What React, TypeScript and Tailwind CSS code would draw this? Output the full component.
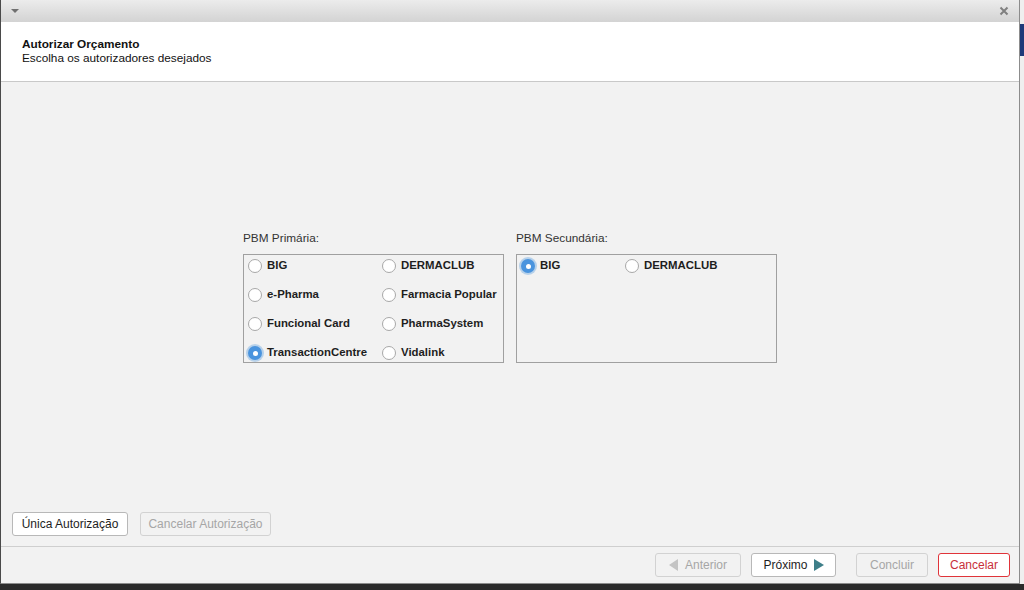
import React, { useState } from 'react';

const font = { fontFamily: '"Liberation Sans", Arial, sans-serif' };

const Radio: React.FC<{ label: string; checked: boolean; onClick: () => void }> = ({ label, checked, onClick }) => (
  <div className="flex items-center gap-[5px] h-[20px] cursor-pointer" onClick={onClick}>
    {checked ? (
      <span className="w-[14px] h-[14px] shrink-0 rounded-full bg-[#4a94de] shadow-[0_0_0_2px_rgba(74,148,222,0.35)] flex items-center justify-center">
        <span className="w-[5px] h-[5px] rounded-full bg-white" />
      </span>
    ) : (
      <span className="w-[14px] h-[14px] shrink-0 rounded-full bg-white border border-[#a8a8a8]" />
    )}
    <span className="text-[11.4px] font-bold text-[#1e1e1e] whitespace-nowrap">{label}</span>
  </div>
);

const Panel: React.FC<{
  title: string;
  items: string[];
  col: string;
  selected: string;
  onSelect: (s: string) => void;
}> = ({ title, items, col, selected, onSelect }) => (
  <div className="w-[261px]">
    <div className="text-[11.8px] leading-[14px] text-[#333] mb-[9px]">{title}</div>
    <div className="h-[109px] border border-[#a0a0a0] pl-[4px] pt-[1px]">
      <div className={`grid ${col} gap-y-[9px]`}>
        {items.map(it => (
          <Radio key={it} label={it} checked={selected === it} onClick={() => onSelect(it)} />
        ))}
      </div>
    </div>
  </div>
);

const Btn: React.FC<{ children: React.ReactNode; w: string; variant?: 'normal' | 'disabled' | 'danger' }> = ({
  children,
  w,
  variant = 'normal',
}) => {
  const styles =
    variant === 'disabled'
      ? 'bg-[#f2f2f2] border-[#d2d2d2] text-[#a6a6a6]'
      : variant === 'danger'
      ? 'bg-white border-[#e0343a] text-[#c8303a]'
      : 'bg-white border-[#b8b8b8] text-[#1e1e1e]';
  return (
    <button
      className={`${w} h-[24px] rounded-[3px] border flex items-center justify-center gap-[6px] text-[12px] ${styles}`}
      style={font}
    >
      {children}
    </button>
  );
};

export default function App() {
  const [primary, setPrimary] = useState('TransactionCentre');
  const [secondary, setSecondary] = useState('BIG');

  const primaryItems = [
    'BIG',
    'DERMACLUB',
    'e-Pharma',
    'Farmacia Popular',
    'Funcional Card',
    'PharmaSystem',
    'TransactionCentre',
    'Vidalink',
  ];

  return (
    <div className="w-[1024px] h-[590px] bg-[#2b2b2b] flex flex-col overflow-hidden" style={font}>
      <div className="flex h-[584px]">
        {/* Dialog window */}
        <div className="w-[1020px] h-full flex flex-col bg-[#f2f2f2] border-l border-l-[#4a4a4a] border-r border-r-[#8c8c8c] border-b border-b-[#8c8c8c]">
          {/* Title bar */}
          <div className="h-[22px] bg-gradient-to-b from-[#ececec] to-[#d3d3d3] flex items-center justify-between px-[9px]">
            <svg width="10" height="6" viewBox="0 0 10 6">
              <path d="M1 1 L9 1 L5 5 Z" fill="#707070" />
            </svg>
            <svg width="10" height="10" viewBox="0 0 10 10" className="mr-[1px]">
              <path d="M1.5 1.5 L8.5 8.5 M8.5 1.5 L1.5 8.5" stroke="#808080" strokeWidth="2" />
            </svg>
          </div>

          {/* Header */}
          <div className="h-[60px] bg-white border-b border-[#c9c9c9] pl-[21px] pt-[15px]">
            <div className="text-[11.8px] leading-[14px] font-bold text-[#111]">Autorizar Orçamento</div>
            <div className="text-[11.8px] leading-[14px] text-[#111]">Escolha os autorizadores desejados</div>
          </div>

          {/* Body */}
          <div className="flex-1 flex flex-col">
            <div className="flex-1 flex justify-center gap-[12px] pt-[149px]">
              <Panel
                title="PBM Primária:"
                items={primaryItems}
                col="grid-cols-[134px_1fr]"
                selected={primary}
                onSelect={setPrimary}
              />
              <Panel
                title="PBM Secundária:"
                items={['BIG', 'DERMACLUB']}
                col="grid-cols-[104px_1fr]"
                selected={secondary}
                onSelect={setSecondary}
              />
            </div>
            <div className="flex gap-[12px] pl-[11px] pb-[10px]">
              <Btn w="w-[116px]">Única Autorização</Btn>
              <Btn w="w-[131px]" variant="disabled">
                Cancelar Autorização
              </Btn>
            </div>
          </div>

          {/* Footer */}
          <div className="h-[37px] border-t border-[#cfcfcf] flex justify-end items-start pt-[6px] pr-[9px]">
            <Btn w="w-[86px]" variant="disabled">
              <svg width="10" height="12" viewBox="0 0 10 12">
                <path d="M9 0 L9 12 L0 6 Z" fill="#c4c4c4" />
              </svg>
              Anterior
            </Btn>
            <div className="w-[10px]" />
            <Btn w="w-[85px]">
              Próximo
              <svg width="10" height="12" viewBox="0 0 10 12">
                <path d="M0 0 L0 12 L10 6 Z" fill="#3e7f89" />
              </svg>
            </Btn>
            <div className="w-[20px]" />
            <Btn w="w-[72px]" variant="disabled">
              Concluir
            </Btn>
            <div className="w-[10px]" />
            <Btn w="w-[72px]" variant="danger">
              Cancelar
            </Btn>
          </div>
        </div>

        {/* Background to the right of the window */}
        <div className="flex-1 bg-[#efefef] flex flex-col">
          <div className="h-[24px]" />
          <div className="h-[32px] bg-[#1e3a7a]" />
        </div>
      </div>
    </div>
  );
}
